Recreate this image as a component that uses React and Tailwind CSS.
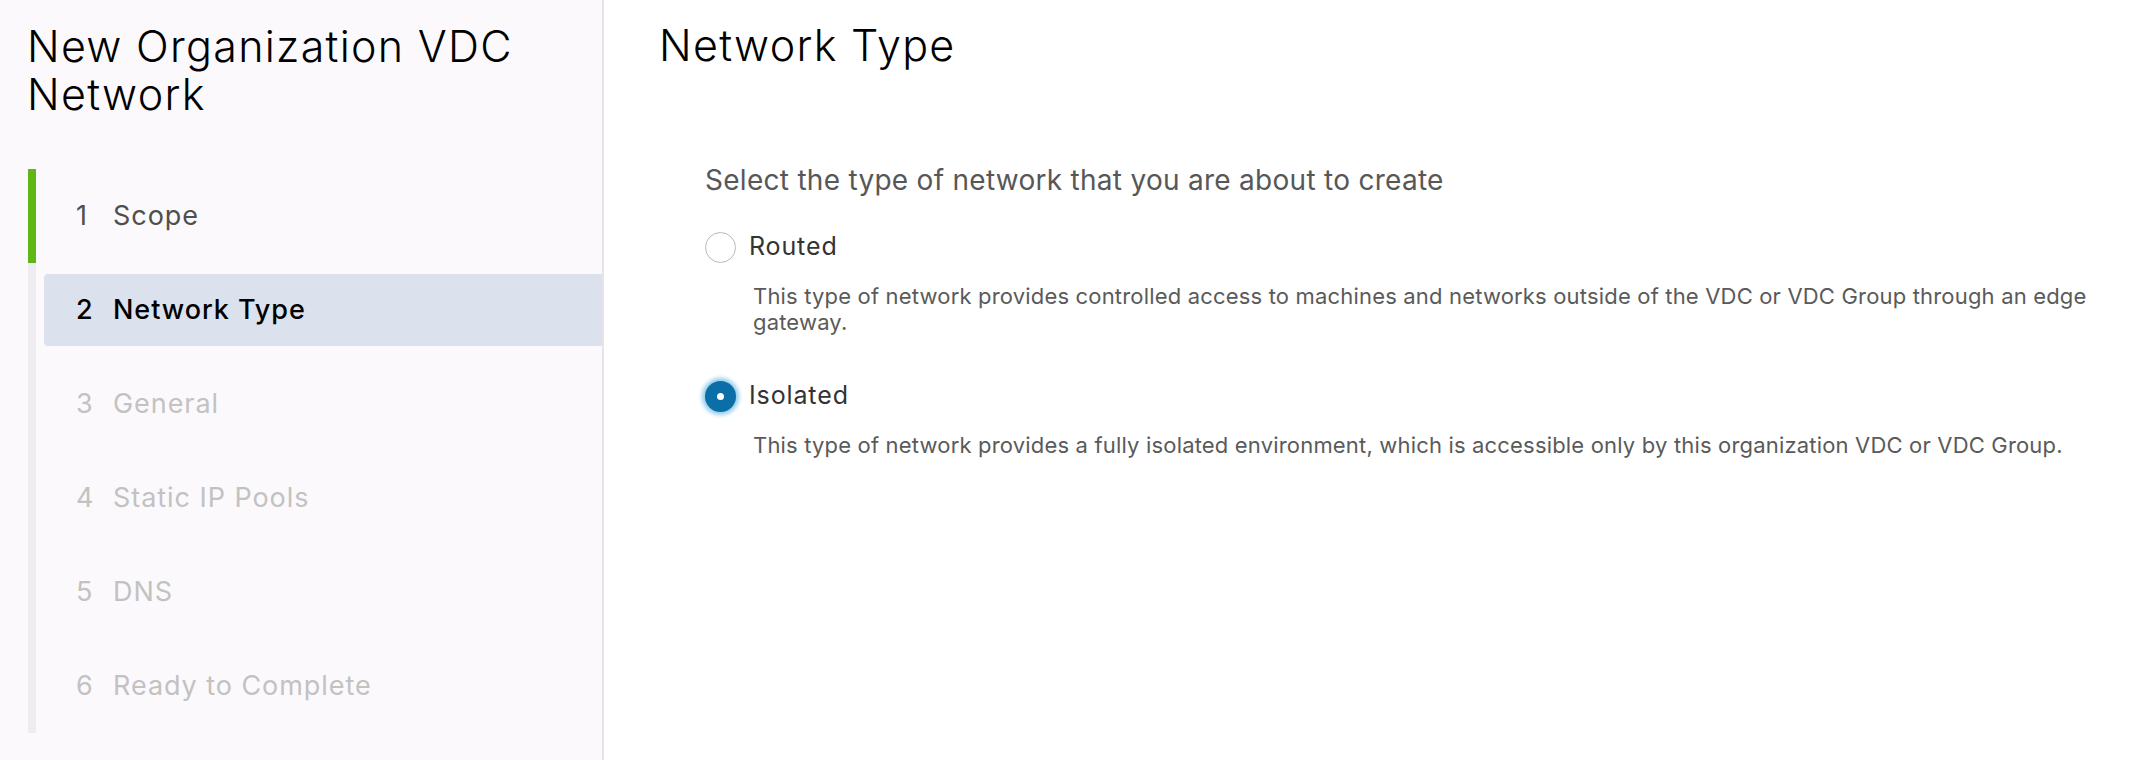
import React from 'react';
import clsx from 'clsx';

const steps = [
    { n: 1, label: 'Scope', state: 'done' },
    { n: 2, label: 'Network Type', state: 'current' },
    { n: 3, label: 'General', state: 'todo' },
    { n: 4, label: 'Static IP Pools', state: 'todo' },
    { n: 5, label: 'DNS', state: 'todo' },
    { n: 6, label: 'Ready to Complete', state: 'todo' },
];

function Radio({ checked }) {
    if (checked) {
        return (
            <span className="flex h-[31px] w-[31px] shrink-0 items-center justify-center rounded-full bg-[#0b6ea6] shadow-[0_0_4px_3px_#8fcbec]">
                <span className="h-[7px] w-[7px] rounded-full bg-white" />
            </span>
        );
    }
    return <span className="h-[31px] w-[31px] shrink-0 rounded-full border border-[#b9b9b9] bg-white" />;
}

function Option({ label, checked, children, className }) {
    return (
        <div className={className}>
            <label className="flex h-[34px] items-center gap-[13px]">
                <Radio checked={checked} />
                <span className="text-[25px] tracking-[0.035em] text-[#333333]">{label}</span>
            </label>
            <p className="mt-[19px] max-w-[1400px] pl-[48px] text-[22px] leading-[26px] tracking-[0.008em] text-[#5a5a5a]">
                {children}
            </p>
        </div>
    );
}

export default function App() {
    return (
        <div className="flex h-[760px] w-full font-['Inter','Liberation_Sans',sans-serif]">
            <aside className="w-[604px] shrink-0 border-r-2 border-[#e6e4ea] bg-[#fcf9fc]">
                <h1 className="pl-[27px] pr-[30px] pt-[22px] text-[43px] font-light leading-[48px] tracking-[0.03em] text-black">
                    New Organization VDC Network
                </h1>
                <ol className="ml-[28px] mt-[51px]">
                    {steps.map((s) => (
                        <li
                            key={s.n}
                            className={clsx(
                                'flex h-[94px] items-center border-l-8 pl-2',
                                s.state === 'done' ? 'border-[#5eb715]' : 'border-[#efecf1]'
                            )}
                        >
                            <div
                                className={clsx(
                                    'flex h-[72px] flex-1 items-center rounded-l-[4px] pl-[32px] text-[27px] tracking-[0.035em]',
                                    s.state === 'current' && 'bg-[#dbe1ed] font-medium text-black',
                                    s.state === 'done' && 'text-[#4f4f4f]',
                                    s.state === 'todo' && 'text-[#c2c2c2]'
                                )}
                            >
                                <span className="w-[37px]">{s.n}</span>
                                <span>{s.label}</span>
                            </div>
                        </li>
                    ))}
                </ol>
            </aside>
            <main className="flex-1 bg-white pl-[55px] pr-[40px]">
                <h2 className="pt-[21px] text-[43px] font-light leading-[48px] tracking-[0.03em] text-black">Network Type</h2>
                <div className="ml-[46px] mt-[94px]">
                    <p className="text-[28px] leading-[34px] tracking-[0.01em] text-[#575757]">
                        Select the type of network that you are about to create
                    </p>
                    <Option label="Routed" className="mt-[33px]">
                        This type of network provides controlled access to machines and networks outside of the VDC or VDC Group through an edge gateway.
                    </Option>
                    <Option label="Isolated" checked className="mt-[44px]">
                        This type of network provides a fully isolated environment, which is accessible only by this organization VDC or VDC Group.
                    </Option>
                </div>
            </main>
        </div>
    );
}
